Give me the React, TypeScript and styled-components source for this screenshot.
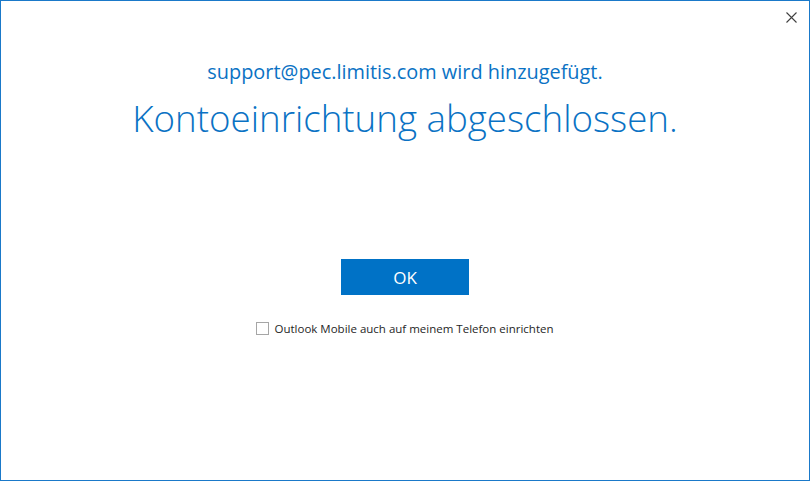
import React, { useState } from "react";
import styled, { createGlobalStyle } from "styled-components";

const GlobalStyle = createGlobalStyle`
  html, body { margin: 0; padding: 0; background: #ffffff; }
  * { box-sizing: border-box; }
  body { font-family: "Open Sans", "Noto Sans", "Liberation Sans", sans-serif; }
`;

const Window = styled.div`
  width: 810px;
  height: 481px;
  border: 1px solid #1a79c9;
  background: #ffffff;
  display: flex;
  flex-direction: column;
  align-items: center;
  position: relative;
`;

const CloseButton = styled.button`
  position: absolute;
  top: 5px;
  right: 7px;
  width: 22px;
  height: 22px;
  padding: 0;
  border: none;
  background: transparent;
  display: flex;
  align-items: center;
  justify-content: center;
  cursor: pointer;
`;

const Subtitle = styled.div`
  margin-top: 59px;
  height: 24px;
  line-height: 24px;
  font-size: 19.9px;
  color: #0a72c4;
  white-space: nowrap;
`;

const Heading = styled.h1`
  margin: 10px 0 0;
  height: 48px;
  line-height: 48px;
  font-size: 36.7px;
  font-weight: 300;
  color: #0a72c4;
  white-space: nowrap;
`;

const PrimaryButton = styled.button`
  margin-top: 117px;
  width: 128px;
  height: 36px;
  border: none;
  background: #0072c6;
  color: #ffffff;
  font-family: inherit;
  font-size: 17px;
  cursor: pointer;
`;

const CheckRow = styled.label`
  margin-top: 25px;
  display: flex;
  align-items: center;
  gap: 5px;
  height: 16px;
  font-size: 11.5px;
  color: #262626;
  cursor: pointer;
  white-space: nowrap;
`;

const Box = styled.span<{ $checked: boolean }>`
  width: 13px;
  height: 13px;
  border: 1px solid #a6a6a6;
  background: #ffffff;
  display: inline-flex;
  align-items: center;
  justify-content: center;
  font-size: 10px;
  line-height: 1;
  color: #333;
`;

export default function App() {
  const [checked, setChecked] = useState(false);
  return (
    <>
      <GlobalStyle />
      <Window>
        <CloseButton aria-label="Schließen">
          <svg width="11" height="11" viewBox="0 0 11 11">
            <path d="M0.5 0.5 L10.5 10.5 M10.5 0.5 L0.5 10.5" stroke="#404040" strokeWidth="1.1" />
          </svg>
        </CloseButton>
        <Subtitle>support@pec.limitis.com wird hinzugefügt.</Subtitle>
        <Heading>Kontoeinrichtung abgeschlossen.</Heading>
        <PrimaryButton>OK</PrimaryButton>
        <CheckRow onClick={() => setChecked(!checked)}>
          <Box $checked={checked}>{checked ? "✓" : ""}</Box>
          Outlook Mobile auch auf meinem Telefon einrichten
        </CheckRow>
      </Window>
    </>
  );
}
